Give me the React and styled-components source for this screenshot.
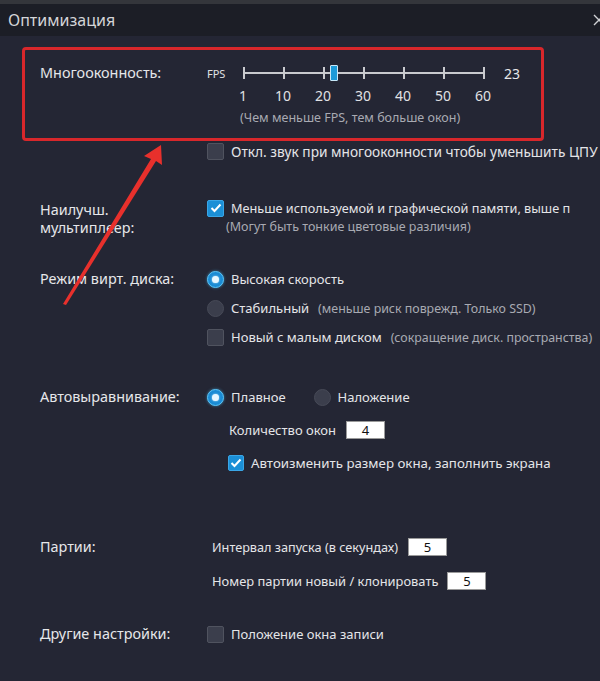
import React from "react"
import styled, { createGlobalStyle } from "styled-components"

const GlobalStyle = createGlobalStyle`
  html, body { margin: 0; padding: 0; background: #242634; }
  body { font-family: "Noto Sans", "Open Sans", sans-serif; }
`

const Window = styled.div`
  position: relative;
  width: 600px;
  height: 681px;
  overflow: hidden;
  background: #242634;
  color: #e4e5e8;
`

const TopStrip = styled.div`
  height: 4px;
  background: #34363b;
`

const TitleBar = styled.div`
  height: 32px;
  display: flex;
  align-items: center;
  justify-content: space-between;
  padding-left: 8px;
  background: #1c1e26;
  font-size: 16px;
  color: #d4d5d8;
`

const Close = styled.svg`
  margin-right: -6px;
  flex: none;
`

const Highlight = styled.div`
  margin: 11px 56px 0 22px;
  height: 88px;
  border: 3px solid #d8272b;
  border-radius: 4px;
  padding-left: 15px;
  display: grid;
  grid-template-columns: 167px 1fr;
`

const Section = styled.div`
  display: grid;
  grid-template-columns: 167px 1fr;
  padding-left: 40px;
  margin-top: ${(p) => p.$top || 0}px;
`

const Label = styled.div`
  font-size: 14.4px;
  line-height: 18px;
  color: #e6e7ea;
  padding-top: ${(p) => p.$pad ?? 1}px;
`

const Controls = styled.div`
  display: flex;
  flex-direction: column;
  gap: ${(p) => p.$gap || 0}px;
`

const Row = styled.div`
  height: 20px;
  display: flex;
  align-items: center;
  gap: ${(p) => p.$gap ?? 7}px;
  padding-left: ${(p) => p.$indent || 0}px;
  font-size: ${(p) => p.$size || 13}px;
  white-space: nowrap;
`

const Note = styled.span`
  color: #a8aab2;
  font-size: 12.4px;
  margin-left: ${(p) => p.$left || 0}px;
`

const SubNote = styled.div`
  height: 18px;
  line-height: 18px;
  padding-left: 19px;
  font-size: 12.5px;
  color: #a8aab2;
  white-space: nowrap;
`

const Box = styled.span`
  flex: none;
  width: ${(p) => p.$size || 17}px;
  height: ${(p) => p.$size || 17}px;
  box-sizing: border-box;
  border-radius: 2px;
  display: flex;
  align-items: center;
  justify-content: center;
  background: ${(p) => (p.$on ? "#1b8fd6" : "#3b3e4c")};
  border: 1px solid ${(p) => (p.$on ? "#3aa6e6" : "#50535f")};
`

const Radio = styled.span`
  flex: none;
  width: 17px;
  height: 17px;
  box-sizing: border-box;
  border-radius: 50%;
  display: flex;
  align-items: center;
  justify-content: center;
  margin-left: ${(p) => p.$left || 0}px;
  background: ${(p) => (p.$on ? "#1a8bd4" : "#3b3e4c")};
  border: 1px solid ${(p) => (p.$on ? "#5cc4f5" : "#474a57")};
  box-shadow: ${(p) => (p.$on ? "0 0 3px rgba(80,190,245,0.6)" : "none")};
  &::after {
    content: "";
    display: ${(p) => (p.$on ? "block" : "none")};
    width: 7px;
    height: 7px;
    border-radius: 50%;
    background: #e6f7ff;
    box-shadow: 0 0 2px #bfe9ff;
  }
`

const NumInput = styled.span`
  flex: none;
  width: 39px;
  height: 18px;
  box-sizing: border-box;
  background: #ffffff;
  border: 1px solid #9a9a9a;
  color: #111;
  font-size: 13px;
  display: flex;
  align-items: center;
  justify-content: center;
  margin-left: ${(p) => p.$left || 0}px;
`

const SliderWrap = styled.div`
  display: flex;
  flex-direction: column;
  padding-top: 13px;
`

const SliderRow = styled.div`
  height: 20px;
  display: flex;
  align-items: center;
`

const Fps = styled.span`
  width: 36px;
  font-size: 11px;
  color: #e0e1e4;
`

const Track = styled.div`
  position: relative;
  width: 242px;
  height: 12px;
  display: flex;
  justify-content: space-between;
  align-items: center;
  &::before {
    content: "";
    position: absolute;
    left: 0;
    right: 0;
    top: 5px;
    height: 2px;
    background: #c9cace;
  }
`

const Tick = styled.span`
  width: 2px;
  height: 12px;
  background: #c9cace;
  z-index: 1;
`

const Thumb = styled.span`
  position: absolute;
  top: -2px;
  width: 8px;
  height: 16px;
  box-sizing: border-box;
  background: #1c9ad8;
  border: 1px solid #c8e8f8;
  border-radius: 1px;
  z-index: 2;
`

const Value = styled.span`
  margin-left: 19px;
  font-size: 14px;
  color: #e6e7ea;
`

const Scale = styled.div`
  display: flex;
  margin-left: 16px;
  margin-top: 2px;
  height: 20px;
  align-items: center;
`

const ScaleNum = styled.span`
  width: 40px;
  text-align: center;
  font-size: 14px;
  color: #e0e1e4;
`

const Hint = styled.div`
  margin-top: 4px;
  padding-left: 33px;
  font-size: 12.5px;
  color: #a8aab2;
  white-space: nowrap;
`

const Overlay = styled.svg`
  position: absolute;
  left: 0;
  top: 0;
  pointer-events: none;
`

const Check = () => (
  <svg width="12" height="10" viewBox="0 0 12 10">
    <polyline points="1.5,5 4.5,8 10.5,1.5" fill="none" stroke="#fff" strokeWidth="2" />
  </svg>
)

const ticks = [1, 10, 20, 30, 40, 50, 60]
const fps = 23
const thumbLeft = ((fps - 10) / 10) * 40 + 40 - 5

export default function App() {
  return (
    <Window>
      <GlobalStyle />
      <TopStrip />
      <TitleBar>
        <span>Оптимизация</span>
        <Close width="14" height="14" viewBox="0 0 14 14">
          <path d="M2 2 L12 12 M12 2 L2 12" stroke="#d0d1d4" strokeWidth="1.4" />
        </Close>
      </TitleBar>

      <Highlight>
        <Label $pad={14}>Многооконность:</Label>
        <SliderWrap>
          <SliderRow>
            <Fps>FPS</Fps>
            <Track>
              {ticks.map((t) => (
                <Tick key={t} />
              ))}
              <Thumb style={{ left: thumbLeft }} />
            </Track>
            <Value>{fps}</Value>
          </SliderRow>
          <Scale>
            {ticks.map((t) => (
              <ScaleNum key={t}>{t}</ScaleNum>
            ))}
          </Scale>
          <Hint>(Чем меньше FPS, тем больше окон)</Hint>
        </SliderWrap>
      </Highlight>

      <Section>
        <div />
        <Controls>
          <Row $size={13.7}>
            <Box />
            Откл. звук при многооконности чтобы уменьшить ЦПУ
          </Row>
        </Controls>
      </Section>

      <Section $top={37}>
        <Label $pad={3}>
          Наилучш.
          <br />
          мультиплеер:
        </Label>
        <Controls>
          <Row $size={12.7}>
            <Box $on>
              <Check />
            </Box>
            Меньше используемой и графической памяти, выше п
          </Row>
          <SubNote>(Могут быть тонкие цветовые различия)</SubNote>
        </Controls>
      </Section>

      <Section $top={32}>
        <Label>Режим вирт. диска:</Label>
        <Controls $gap={9}>
          <Row>
            <Radio $on />
            Высокая скорость
          </Row>
          <Row>
            <Radio />
            Стабильный
            <Note $left={2}>(меньше риск поврежд. Только SSD)</Note>
          </Row>
          <Row>
            <Box />
            Новый с малым диском
            <Note $left={2}>(сокращение диск. пространства)</Note>
          </Row>
        </Controls>
      </Section>

      <Section $top={40}>
        <Label>Автовыравнивание:</Label>
        <Controls $gap={13}>
          <Row>
            <Radio $on />
            Плавное
            <Radio $left={21} />
            Наложение
          </Row>
          <Row $indent={22}>
            Количество окон
            <NumInput $left={3}>4</NumInput>
          </Row>
          <Row $indent={21} $size={13.3}>
            <Box $on $size={16}>
              <Check />
            </Box>
            Автоизменить размер окна, заполнить экрана
          </Row>
        </Controls>
      </Section>

      <Section $top={64}>
        <Label>Партии:</Label>
        <Controls $gap={14}>
          <Row $indent={5} $size={12.7}>
            Интервал запуска (в секундах)
            <NumInput $left={3}>5</NumInput>
          </Row>
          <Row $indent={5} $size={12.9}>
            Номер партии новый / клонировать
            <NumInput $left={2}>5</NumInput>
          </Row>
        </Controls>
      </Section>

      <Section $top={33}>
        <Label>Другие настройки:</Label>
        <Controls>
          <Row>
            <Box />
            Положение окна записи
          </Row>
        </Controls>
      </Section>

      <Overlay width="600" height="681" viewBox="0 0 600 681">
        <polygon points="161,145 144,156 151,159 63,304 66,305 156,161 162,165" fill="#e8302c" />
      </Overlay>
    </Window>
  )
}
